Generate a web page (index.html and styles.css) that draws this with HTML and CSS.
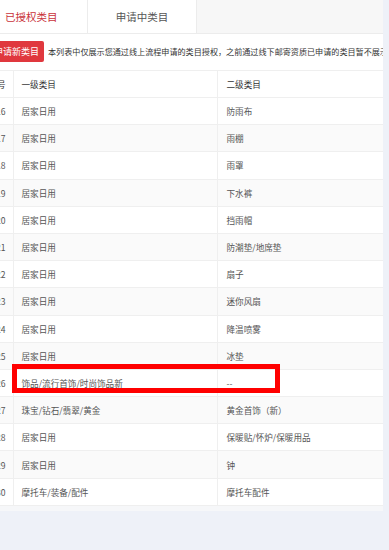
FILE: index.html
```html
<!DOCTYPE html>
<html lang="zh-CN">
<head>
<meta charset="utf-8">
<link rel="stylesheet" href="styles.css">
</head>
<body>
<div class="page">
  <div class="panel">
    <div class="tabs">
      <div class="tab active">已授权类目</div>
      <div class="tab">申请中类目</div>
      <div class="tab-rest"></div>
    </div>
    <div class="toolbar">
      <button class="apply-btn">申请新类目</button>
      <span class="notice">本列表中仅展示您通过线上流程申请的类目授权，之前通过线下邮寄资质已申请的类目暂不展示</span>
    </div>
    <div class="table-wrap">
      <table class="cat-table">
        <thead>
          <tr><th class="c-no">序号</th><th class="c-one">一级类目</th><th class="c-two">二级类目</th></tr>
        </thead>
        <tbody>
          <tr><td class="c-no">16</td><td>居家日用</td><td>防雨布</td></tr>
          <tr><td class="c-no">17</td><td>居家日用</td><td>雨棚</td></tr>
          <tr><td class="c-no">18</td><td>居家日用</td><td>雨罩</td></tr>
          <tr><td class="c-no">19</td><td>居家日用</td><td>下水裤</td></tr>
          <tr><td class="c-no">20</td><td>居家日用</td><td>挡雨帽</td></tr>
          <tr><td class="c-no">21</td><td>居家日用</td><td>防潮垫/地席垫</td></tr>
          <tr><td class="c-no">22</td><td>居家日用</td><td>扇子</td></tr>
          <tr><td class="c-no">23</td><td>居家日用</td><td>迷你风扇</td></tr>
          <tr><td class="c-no">24</td><td>居家日用</td><td>降温喷雾</td></tr>
          <tr><td class="c-no">25</td><td>居家日用</td><td>冰垫</td></tr>
          <tr class="marked"><td class="c-no">26</td><td>饰品/流行首饰/时尚饰品新</td><td>--</td></tr>
          <tr><td class="c-no">27</td><td>珠宝/钻石/翡翠/黄金</td><td>黄金首饰（新）</td></tr>
          <tr><td class="c-no">28</td><td>居家日用</td><td>保暖贴/怀炉/保暖用品</td></tr>
          <tr><td class="c-no">29</td><td>居家日用</td><td>钟</td></tr>
          <tr><td class="c-no">30</td><td>摩托车/装备/配件</td><td>摩托车配件</td></tr>
        </tbody>
      </table>
      <div class="highlight"></div>
    </div>
    <div class="panel-foot"></div>
  </div>
</div>
</body>
</html>
```

FILE: styles.css
```css
* { box-sizing: border-box; }
html, body {
  margin: 0;
  padding: 0;
  background: #eef1f8;
  font-family: "Noto Sans CJK SC", "Noto Sans", sans-serif;
  color: #555;
}
.page {
  width: 389px;
  height: 550px;
  overflow: hidden;
}
.panel {
  width: 383px;
  background: #fff;
  overflow: hidden;
}
.tabs {
  display: flex;
  height: 34px;
  border-bottom: 1px solid #ececec;
}
.tab {
  height: 33px;
  display: flex;
  align-items: center;
  font-size: 10.5px;
  color: #555;
  background: #fff;
  border-right: 1px solid #ececec;
}
.tab.active {
  width: 88px;
  padding-left: 5px;
  color: #c9323a;
}
.tab:not(.active) {
  width: 109px;
  justify-content: center;
}
.tab-rest {
  flex: 1;
  background: #f7f7f7;
}
.toolbar {
  height: 36px;
  display: flex;
  align-items: center;
  gap: 4px;
  margin-left: -11px;
  white-space: nowrap;
  padding-bottom: 1px;
}
.apply-btn {
  flex: none;
  height: 21px;
  padding: 0 5px;
  border: none;
  border-radius: 2px;
  background: #e0383e;
  color: #fff;
  font-family: inherit;
  font-size: 9px;
}
.notice {
  font-size: 8.1px;
  color: #333;
}
.table-wrap {
  position: relative;
}
.cat-table {
  margin-left: -27px;
  width: 410px;
  border-collapse: collapse;
  table-layout: fixed;
  font-size: 8.6px;
}
.cat-table th, .cat-table td {
  height: 27.2px;
  padding: 0 8px;
  text-align: left;
  font-weight: normal;
  border-top: 1px solid #efefef;
  border-bottom: 1px solid #efefef;
  white-space: nowrap;
  overflow: hidden;
}
.cat-table th {
  height: 27px;
  color: #333;
}
.cat-table td { color: #555; }
.cat-table .c-no {
  width: 40px;
  text-align: right;
  padding-right: 7px;
  border-right: 1px solid #efefef;
}
.cat-table .c-one {
  width: 204px;
  border-right: 1px solid #efefef;
}
.cat-table td:nth-child(2) { border-right: 1px solid #efefef; }
.cat-table tbody tr:nth-child(even) { background: #fafafa; }
.cat-table td:nth-child(3), .cat-table .c-two { padding-left: 9px; }
.highlight {
  position: absolute;
  left: 12px;
  top: 294px;
  width: 268px;
  height: 29px;
  border: 5px solid #ff0000;
}
.panel-foot {
  height: 5px;
  background: #f6f7f9;
}
```
